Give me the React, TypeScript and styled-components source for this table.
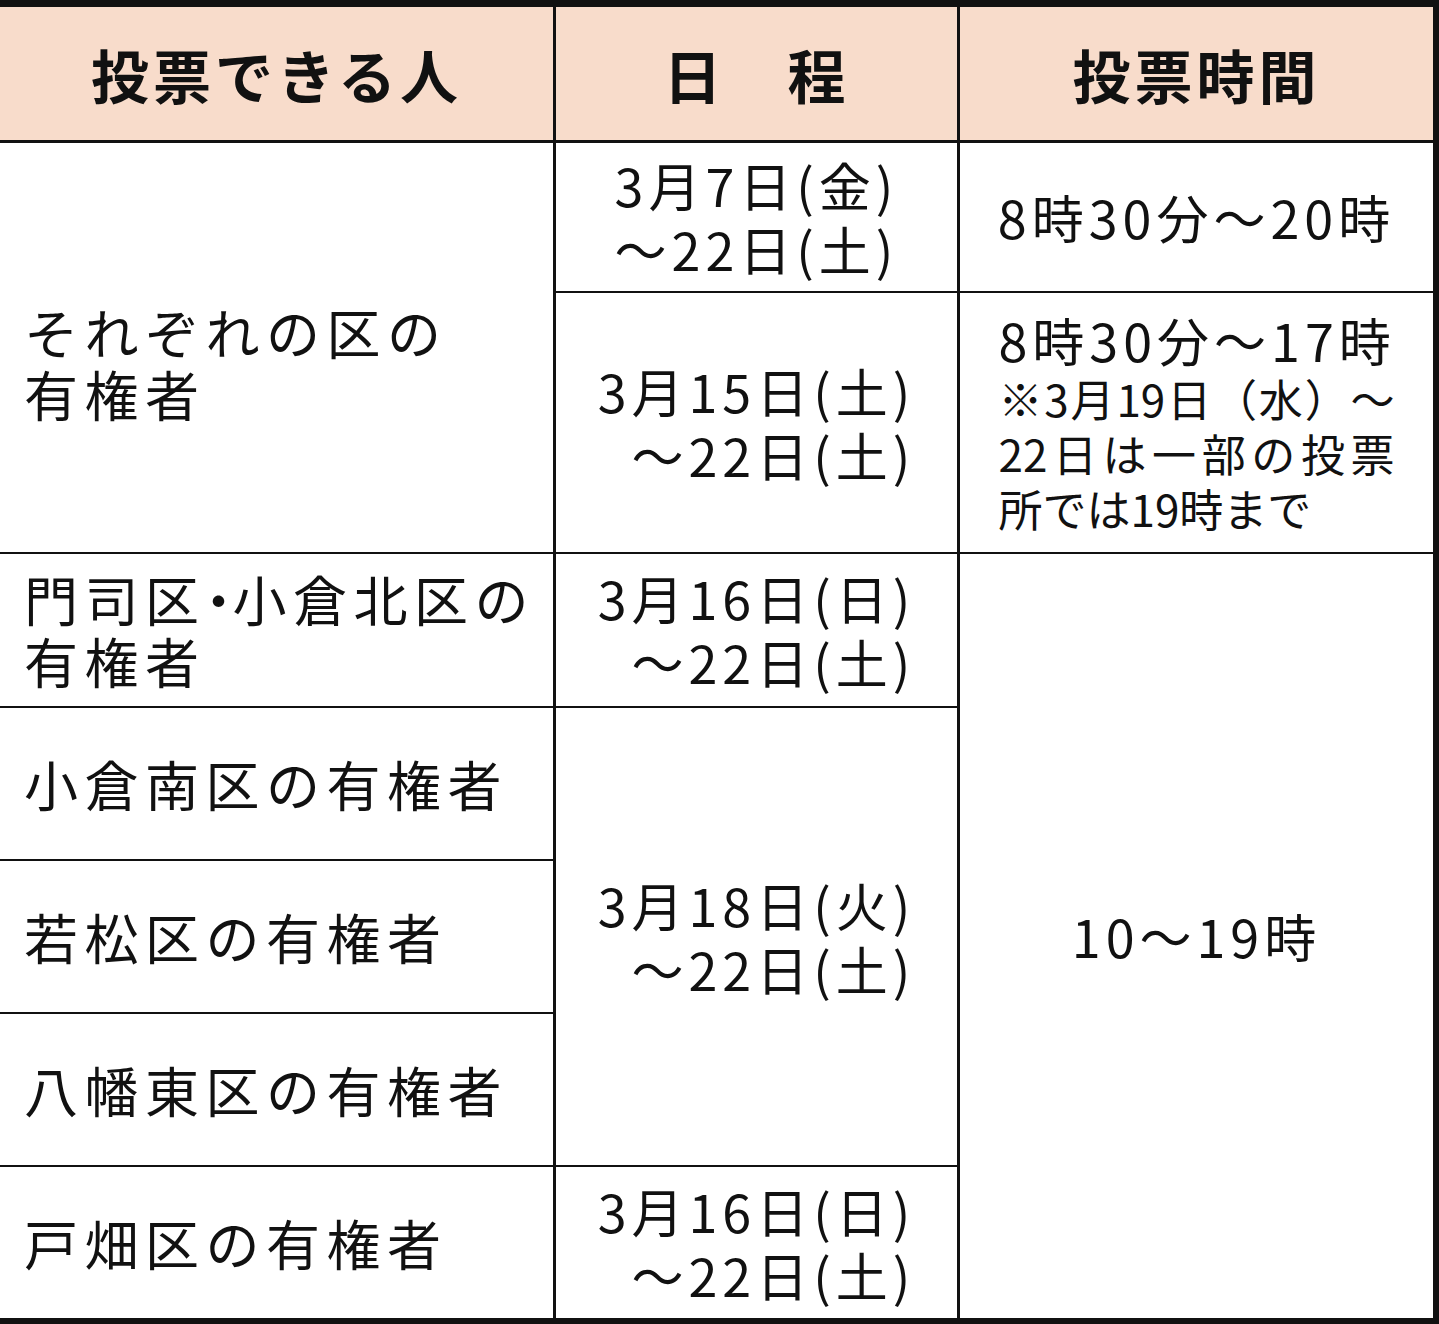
import React from 'react';
import styled, { createGlobalStyle } from 'styled-components';

const GlobalStyle = createGlobalStyle`
  html, body {
    margin: 0;
    padding: 0;
    background: #ffffff;
  }
  body {
    font-family: 'Noto Sans CJK JP', 'Noto Sans', sans-serif;
    color: #111;
  }
`;

const Table = styled.table`
  width: 1439px;
  table-layout: fixed;
  border-collapse: separate;
  border-spacing: 0;
  border-top: 7px solid #111;
  border-right: 6px solid #111;
  border-bottom: 6px solid #111;
`;

const Row = styled.tr<{ $h: number }>`
  height: ${(p) => p.$h}px;
`;

const HeadCell = styled.th<{ $first?: boolean }>`
  box-sizing: border-box;
  background: #f8dccb;
  border-left: ${(p) => (p.$first ? 'none' : '3px solid #111')};
  font-size: 58px;
  font-weight: 700;
  letter-spacing: 4px;
  text-align: center;
  vertical-align: middle;
  padding: 0;
`;

const Cell = styled.td<{ $first?: boolean; $top?: number }>`
  box-sizing: border-box;
  border-left: ${(p) => (p.$first ? 'none' : '3px solid #111')};
  border-top: ${(p) => p.$top ?? 2}px solid #111;
  vertical-align: middle;
  padding: 0;
`;

const NameCell = styled(Cell)<{ $shift?: number }>`
  padding-left: 24px;
  padding-top: ${(p) => p.$shift ?? 0}px;
  font-size: 54px;
  line-height: 62px;
  letter-spacing: 6.5px;
  text-align: left;
  white-space: nowrap;
`;

const Dot = styled.span`
  margin: 0 -13px 0 -14px;
  letter-spacing: 0;
`;

const DateCell = styled(Cell)`
  text-align: center;
`;

const DateBlock = styled.div`
  display: inline-block;
  text-align: right;
  font-size: 52px;
  line-height: 64px;
  letter-spacing: 5px;
  white-space: nowrap;
`;

const TimeCell = styled(Cell)`
  text-align: center;
`;

const TimeText = styled.div`
  font-size: 52px;
  line-height: 62px;
  letter-spacing: 5px;
  white-space: nowrap;
`;

const TimeBlock = styled.div`
  display: inline-block;
  width: 396px;
  text-align: left;
`;

const NoteLine = styled.div<{ $spread?: boolean }>`
  font-size: 44px;
  line-height: 55px;
  text-align: left;
  text-align-last: ${(p) => (p.$spread ? 'justify' : 'left')};
  white-space: nowrap;
`;

export default function App() {
  return (
    <>
      <GlobalStyle />
      <Table>
        <colgroup>
          <col style={{ width: 553 }} />
          <col style={{ width: 404 }} />
          <col style={{ width: 476 }} />
        </colgroup>
        <thead>
          <Row $h={133}>
            <HeadCell $first>投票できる人</HeadCell>
            <HeadCell>日　程</HeadCell>
            <HeadCell>投票時間</HeadCell>
          </Row>
        </thead>
        <tbody>
          <Row $h={151}>
            <NameCell $first $top={3} rowSpan={2} $shift={30}>
              それぞれの区の
              <br />
              有権者
            </NameCell>
            <DateCell $top={3}>
              <DateBlock>
                3月7日(金)
                <br />
                〜22日(土)
              </DateBlock>
            </DateCell>
            <TimeCell $top={3}>
              <TimeText>8時30分〜20時</TimeText>
            </TimeCell>
          </Row>
          <Row $h={261}>
            <DateCell>
              <DateBlock>
                3月15日(土)
                <br />
                〜22日(土)
              </DateBlock>
            </DateCell>
            <TimeCell>
              <TimeBlock>
                <TimeText>8時30分〜17時</TimeText>
                <NoteLine $spread>※3月19日（水）〜</NoteLine>
                <NoteLine $spread>22日は一部の投票</NoteLine>
                <NoteLine>所では19時まで</NoteLine>
              </TimeBlock>
            </TimeCell>
          </Row>
          <Row $h={154}>
            <NameCell $first>
              門司区<Dot>・</Dot>小倉北区の
              <br />
              有権者
            </NameCell>
            <DateCell>
              <DateBlock>
                3月16日(日)
                <br />
                〜22日(土)
              </DateBlock>
            </DateCell>
            <TimeCell rowSpan={5}>
              <TimeText>10〜19時</TimeText>
            </TimeCell>
          </Row>
          <Row $h={153}>
            <NameCell $first>小倉南区の有権者</NameCell>
            <DateCell rowSpan={3}>
              <DateBlock>
                3月18日(火)
                <br />
                〜22日(土)
              </DateBlock>
            </DateCell>
          </Row>
          <Row $h={153}>
            <NameCell $first>若松区の有権者</NameCell>
          </Row>
          <Row $h={153}>
            <NameCell $first>八幡東区の有権者</NameCell>
          </Row>
          <Row $h={153}>
            <NameCell $first>戸畑区の有権者</NameCell>
            <DateCell>
              <DateBlock>
                3月16日(日)
                <br />
                〜22日(土)
              </DateBlock>
            </DateCell>
          </Row>
        </tbody>
      </Table>
    </>
  );
}
